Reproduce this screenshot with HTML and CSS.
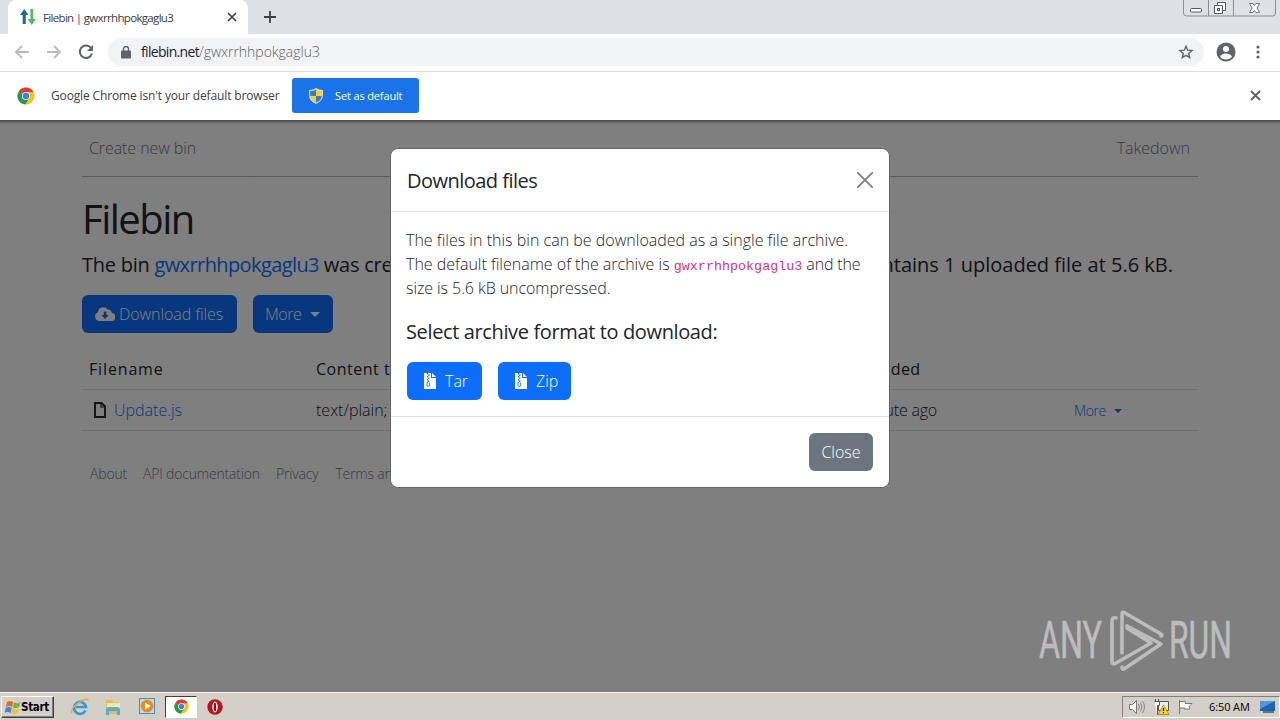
FILE: index.html
```html
<!DOCTYPE html>
<html lang="en">
<head>
<meta charset="utf-8">
<title>Filebin | gwxrrhhpokgaglu3</title>
<link rel="stylesheet" href="styles.css">
</head>
<body>
<svg class="defs" aria-hidden="true">
  <symbol id="chrome" viewBox="0 0 20 20">
    <circle cx="10" cy="10" r="9.5" fill="#fbc116"/>
    <path d="M10 10 1.8 5.2A9.5 9.5 0 0 1 18.3 5.5H10Z" fill="#df3b2f"/>
    <path d="M10 10 1.8 5.2A9.5 9.5 0 0 0 9 19.5L14 12Z" fill="#249b4e"/>
    <circle cx="10" cy="10" r="4.5" fill="#fff"/><circle cx="10" cy="10" r="3.6" fill="#3f7fe8"/>
  </symbol>
  <symbol id="zip" viewBox="0 0 12 16">
    <path d="M0 0h7v5h5v11H0Z" fill="#fff"/><path d="M8 0v4h4Z" fill="#fff"/>
    <path d="M3 0h1.2v1.5H3zM4.2 1.5h1.2V3H4.2zM3 3h1.2v1.5H3zM4.2 4.5h1.2V6H4.2zM3 6h1.2v1.5H3zM4.2 7.5h1.2V9H4.2z" fill="#0d6efd"/>
    <path d="M3.4 8.5 3 11.5a1.4 1.4 0 1 0 2.6 0L5.2 9.5" fill="none" stroke="#0d6efd" stroke-width=".9"/>
  </symbol>
</svg>
<div class="screen">
  <header class="tabstrip">
    <div class="tab">
      <svg class="favicon" width="16" height="16" viewBox="0 0 16 16"><path d="M0 6 4.2 0 8.4 6H5.8V15H2.7V6Z" fill="#1769aa"/><path d="M7.6 10 11.8 16 16 10H13.2V0H10.4V10Z" fill="#5db85b"/></svg>
      <span class="tab-title">Filebin | gwxrrhhpokgaglu3</span>
      <svg class="tab-close" width="10" height="10" viewBox="0 0 10 10"><path d="m1 1 8 8M9 1 1 9" stroke="#3c4043" stroke-width="1.7"/></svg>
    </div>
    <svg class="newtab" width="12" height="12" viewBox="0 0 12 12"><path d="M6 0v12M0 6h12" stroke="#3c4043" stroke-width="1.8"/></svg>
    <svg class="winbtns" width="94" height="18" viewBox="0 0 94 18"><path d="M.5 0v13q0 3 3 3h86q3 0 3-3V0M25.500 0v16M50.500 0v16" fill="none" stroke="#8b8f97"/>
      <rect x="7.500" y="8.500" width="11" height="3.500" rx="1" fill="#fff" stroke="#555a63"/>
      <path d="M34.500 2.500h8v8h-3v3h-8v-8h3Z" fill="#fff" stroke="#555a63"/><path d="M34.500 5.500h5v5" fill="none" stroke="#555a63"/><rect x="34.500" y="8.500" width="2" height="2" fill="#fff" stroke="#555a63"/>
      <path d="M66.500 3.500h3.500l1.500 2 1.500-2h3.500L74 8l2.500 4.500H73l-1.500-2-1.500 2h-3.500L69 8Z" fill="#fff" stroke="#666b74" stroke-width=".9"/></svg>
  </header>
  <div class="toolbar">
    <svg class="nav" width="16" height="14" viewBox="0 0 16 14"><path d="M15 7H2M8 1 2 7l6 6" fill="none" stroke="#b9bbbe" stroke-width="1.800"/></svg>
    <svg class="nav" width="16" height="14" viewBox="0 0 16 14"><path d="M1 7h13M8 1l6 6-6 6" fill="none" stroke="#b9bbbe" stroke-width="1.800"/></svg>
    <svg class="reload" width="16" height="16" viewBox="0 0 16 16"><path d="M13 4A6.200 6.200 0 1 0 14 9.500" fill="none" stroke="#5f6368" stroke-width="2"/><path d="M15 1v6H9Z" fill="#5f6368"/></svg>
    <div class="omnibox">
      <svg width="10" height="13" viewBox="0 0 10 13"><rect y="4.500" width="10" height="8" rx="1" fill="#5f6368"/><path d="M2.500 5V3a2.500 2.500 0 0 1 5 0v2" fill="none" stroke="#5f6368" stroke-width="1.400"/></svg>
      <span class="url"><b>filebin.net</b>/gwxrrhhpokgaglu3</span>
      <svg class="star" width="16" height="16" viewBox="0 0 16 16"><path d="m8 2.200 1.700 4 4.300.4-3.300 2.800 1 4.200L8 11.400l-3.700 2.200 1-4.200L2 6.600l4.300-.4Z" fill="none" stroke="#5f6368" stroke-width="1.400"/></svg>
    </div>
    <svg class="avatar" width="20" height="20" viewBox="0 0 20 20"><circle cx="10" cy="10" r="9.500" fill="#5f6368"/><circle cx="10" cy="7" r="3" fill="#fff"/><path d="M4 14.500q2-3 6-3t6 3q-2 3-6 3t-6-3Z" fill="#fff"/></svg>
    <svg class="dots" width="4" height="14" viewBox="0 0 4 14"><g fill="#5f6368"><circle cx="2" cy="2" r="1.600"/><circle cx="2" cy="7" r="1.600"/><circle cx="2" cy="12" r="1.600"/></g></svg>
  </div>
  <div class="infobar">
    <svg width="18" height="18"><use href="#chrome"/></svg>
    <span class="info-text">Google Chrome isn't your default browser</span>
    <button class="set-default">
      <svg width="14" height="16" viewBox="0 0 14 16"><path d="M7 0q3 2 7 2v5q0 6-7 9-7-3-7-9V2q4 0 7-2Z" fill="#d9dde0"/><path d="M7 1.500V8H1.200V3Q5 3 7 1.500Z" fill="#3c78c8"/><path d="M7 1.500V8h5.800V3Q9 3 7 1.500Z" fill="#f7d51d"/><path d="M1.200 8H7v6.700Q1.800 12.500 1.200 8Z" fill="#f7d51d"/><path d="M12.800 8H7v6.700q5.200-2.200 5.800-6.700Z" fill="#3c78c8"/></svg>
      <span>Set as default</span>
    </button>
    <svg class="info-close" width="11" height="11" viewBox="0 0 11 11"><path d="m1 1 9 9M10 1l-9 9" stroke="#5f6368" stroke-width="1.900"/></svg>
  </div>
  <main class="viewport">
    <div class="page">
      <nav class="topnav"><span class="create">Create new bin</span><span class="takedown">Takedown</span></nav>
      <h1>Filebin</h1>
      <div class="lead"><span class="lead-l">The bin <a>gwxrrhhpokgaglu3</a> was created</span><span class="lead-r">It contains 1 uploaded file at 5.6 kB.</span></div>
      <div class="actions">
        <button class="btn dl"><svg width="20" height="14" viewBox="0 0 20 14"><path d="M4.500 14A4.500 4.500 0 0 1 3 5.300 5.200 5.200 0 0 1 12.500 2.500 3.500 3.500 0 0 1 16.700 6 4 4 0 0 1 16 14Z" fill="#fff"/><path d="M8.700 4.500h2.600V8h2.500L10 12 6.200 8h2.500Z" fill="#0d6efd"/></svg><span>Download files</span></button>
        <button class="btn more"><span>More</span><i class="caret"></i></button>
      </div>
      <div class="table">
        <div class="row head"><span class="fn">Filename</span><span class="ct">Content type</span><span class="up">Uploaded</span><span></span></div>
        <div class="row"><span class="file"><svg width="12" height="16" viewBox="0 0 12 16"><path d="M1 1h6.500L11 4.500V15H1Z" fill="none" stroke="#212529" stroke-width="1.900"/><path d="M7 1v4h4" fill="none" stroke="#212529" stroke-width="1.200"/></svg><a>Update.js</a></span><span class="tp">text/plain;</span><span class="ago">1 minute ago</span><span class="rowmore">More<i class="caret"></i></span></div>
      </div>
      <footer class="foot"><span class="f1">About</span><span class="f2">API documentation</span><span class="f3">Privacy</span><span class="f4">Terms and</span></footer>
    </div>
    <div class="backdrop"></div>
    <section class="modal">
      <div class="m-head"><h5 class="m-title">Download files</h5><svg width="16" height="16" viewBox="0 0 16 16"><path d="m.8.8 14.400 14.400M15.200.8.800 15.200" stroke="#7f7f7f" stroke-width="1.800" stroke-linecap="round"/></svg></div>
      <div class="m-body">
        <p><span class="l1">The files in this bin can be downloaded as a single file archive.</span><br><span class="l2">The default filename of the archive is </span><code>gwxrrhhpokgaglu3</code><span class="l2b"> and the</span><br><span class="l3">size is 5.6 kB uncompressed.</span></p>
        <h5 class="select">Select archive format to download:</h5>
        <div class="formats"><button class="btn tar"><svg width="12" height="16"><use href="#zip"/></svg><span>Tar</span></button><button class="btn zip"><svg width="12" height="16"><use href="#zip"/></svg><span>Zip</span></button></div>
      </div>
      <div class="m-foot"><button class="btn close"><span>Close</span></button></div>
    </section>
    <svg class="watermark" width="215" height="80" viewBox="1035 600 215 80">
      <g class="wm-text"><text x="1039" y="658" textLength="63" lengthAdjust="spacingAndGlyphs">ANY</text><text x="1169" y="658" textLength="63" lengthAdjust="spacingAndGlyphs">RUN</text></g>
      <g fill="none" stroke="#bdbdbd" stroke-width="3.600" stroke-linejoin="round" stroke-linecap="round"><path d="M1116 618q-4-1-4 3v41q0 3 4 1l35-20-24-15"/><path d="M1122 653V614q0-3 3-1l36 21q2 1 0 2M1127 626l34 18-37 25q-2 1-2-2"/></g>
    </svg>
  </main>
  <div class="taskbar">
    <div class="start"><svg width="16" height="16" viewBox="0 0 16 16"><path d="M2 3q3-2 6 0L7 8Q4 6 1 8Z" fill="#e8652a"/><path d="M9 3.300q3 2 6.500 0L14 8q-3 2-6 .4Z" fill="#70b33a"/><path d="M.8 9q3-2 6 0L5.500 14q-3-2-6 0Z" fill="#3f86d6"/><path d="M7.700 9.400q3 2 6 0L12 14q-3 2-6 .3Z" fill="#f4c221"/></svg><b>Start</b></div>
    <svg class="ie" width="18" height="18" viewBox="0 0 18 18"><path d="M14.500 12.500A6 6 0 1 1 15 9H5" fill="none" stroke="#3699d8" stroke-width="2.600"/><path d="M1 15Q-1 10 9 4q8-5 8-1" fill="none" stroke="#e5ad33" stroke-width="1.400"/></svg>
    <svg class="explorer" width="18" height="18" viewBox="0 0 18 18"><path d="M2 2h6l1 2h6v12H2Z" fill="#e3bd5c"/><path d="M3 5h13v8H3Z" fill="#fae8a4"/><path d="M2 17v-5q0-3 3-3h8q3 0 3 3v5h-3v-4H5v4Z" fill="#5cabd1"/></svg>
    <svg class="wmp" width="17" height="17" viewBox="0 0 17 17"><rect x=".5" y=".5" width="15" height="15" fill="#b9dcf2" stroke="#4a8cc0"/><circle cx="8" cy="8" r="6.300" fill="#ee8a1d"/><path d="m6 4.500 5.500 3.500L6 11.500Z" fill="#fff"/></svg>
    <div class="active"><svg width="15" height="15"><use href="#chrome"/></svg></div>
    <svg class="opera" width="16" height="16" viewBox="0 0 16 16"><circle cx="8" cy="8" r="7.700" fill="#b5161c"/><ellipse cx="8" cy="8" rx="2.700" ry="5.400" fill="#fff"/><ellipse cx="8" cy="8" rx="1.200" ry="4.600" fill="#8d1017"/></svg>
    <div class="tray">
      <svg width="18" height="16" viewBox="0 0 18 16"><path d="M1.500 5.500h3l4-4v13l-4-4h-3Z" fill="#fff" stroke="#777"/><path d="M10.500 5q2 3 0 6M12.500 3.500q3 4.500 0 9M14.500 2q4 6 0 12" fill="none" stroke="#888"/></svg>
      <svg width="17" height="16" viewBox="0 0 17 16"><path d="M5.500 2.500h10v9h-10Z" fill="#eee" stroke="#555"/><path d="M1.500 2.500h5v4h-2v9M2.500 0v2M5.500 0v2" fill="#fff" stroke="#555"/><path d="m10.500 6 5.500 9.500H5Z" fill="#ffd322" stroke="#9a7900" stroke-width=".7"/><path d="M10.500 9v3M10.500 13v1.200" stroke="#222" stroke-width="1.300"/></svg>
      <svg width="17" height="16" viewBox="0 0 17 16"><path d="M2.500 1v14M2.500 2.500h6v2h6.500l-3 3 1 2.500H7.500V9h-5" fill="#fff" stroke="#777"/></svg>
      <span>6:50 AM</span>
      <svg class="desk" width="16" height="14" viewBox="0 0 16 14"><path d="M0 1h15v10H0Z" fill="#1f63b4"/><path d="M0 1h15L0 9Z" fill="#5198dd"/><path d="M3 12h11" stroke="#63718a" stroke-width="2"/></svg>
    </div>
  </div>
</div>
</body>
</html>
```
FILE: styles.css
```css
* { box-sizing: border-box; }
body { margin: 0; font-family: "Open Sans", "Noto Sans", sans-serif; font-weight: 300; }
svg { display: block; flex: none; }
h1, h5, p { margin: 0; }
button { border: 0; margin: 0; padding: 0; font: inherit; }
span { white-space: pre; }
.defs { position: absolute; width: 0; height: 0; }
.screen { width: 1280px; height: 720px; overflow: hidden; display: flex; flex-direction: column; background: #fff; }

.tabstrip { height: 34px; flex: none; background: #dee1e6; display: flex; padding-left: 8px; }
.tab { width: 240px; background: #fff; border-radius: 8px 8px 0 0; display: flex; align-items: center; padding: 0 11px 0 12px; }
.tab-title { font-size: 11.5px; font-weight: 400; color: #3c4043; margin-left: 7px; letter-spacing: -.67px; }
.tab-close { margin-left: auto; }
.newtab { margin: 11px 0 0 16px; }
.winbtns { margin-left: auto; margin-right: 3px; }
.toolbar { height: 38px; flex: none; display: flex; align-items: center; padding: 0 20px 1px 14px; border-bottom: 1px solid #dcdcde; }
.nav { margin-right: 16px; }
.omnibox { height: 28px; width: 1096px; margin-left: 14px; border-radius: 14px; background: #f1f3f4; display: flex; align-items: center; padding: 0 10px 0 13px; }
.url { margin-left: 10px; font-size: 14px; color: #5f6368; letter-spacing: -.02px; padding-bottom: 1px; }
.url b { font-weight: 400; color: #202124; letter-spacing: -.68px; }
.star { margin-left: auto; }
.avatar { margin-left: 12px; }
.dots { margin-left: auto; }
.infobar { height: 48px; flex: none; display: flex; align-items: center; padding: 0 19px 1px 17px; }
.info-text { font-size: 12px; font-weight: 400; color: #3c4043; margin-left: 16px; width: 229px; letter-spacing: -.14px; }
.set-default { width: 127px; height: 35px; margin-left: 12px; border-radius: 3px; background: #1a73e8; color: #fff; font-size: 11px; font-weight: 400; display: flex; align-items: center; padding-left: 17px; gap: 12px; letter-spacing: -.14px; }
.info-close { margin-left: auto; }

.viewport { position: relative; flex: 1; min-height: 0; overflow: hidden; }
.page { padding: 0 82px; color: #212529; }
.topnav { height: 57px; display: flex; justify-content: space-between; padding: 16px 8px 0 7px; border-bottom: 1px solid #b8b9ba; font-size: 16px; line-height: 24px; color: #6c757d; }
.create { letter-spacing: -.08px; }
h1 { font-size: 40px; line-height: 48px; font-weight: 400; margin-top: 18px; letter-spacing: -1.5px; }
.lead { display: flex; justify-content: space-between; font-size: 20px; line-height: 24px; font-weight: 400; margin-top: 10px; padding-right: 25px; }
.lead-l { letter-spacing: -.25px; }
.lead-l a { letter-spacing: -.6px; }
a { color: #0d6efd; }
.actions { display: flex; gap: 16px; margin-top: 18px; }
.btn { height: 38px; border-radius: 6px; background: #0d6efd; color: #fff; font-size: 16px; line-height: 24px; display: flex; align-items: center; }
.dl { width: 155px; padding-left: 13px; gap: 4px; }
.dl span { letter-spacing: -.07px; }
.more { width: 80px; padding-left: 12px; gap: 9px; }
.more span { letter-spacing: -.5px; }
.caret { width: 0; height: 0; border: 5px solid transparent; border-top-color: currentColor; border-bottom: 0; }
.table { margin-top: 16px; }
.row { height: 41px; display: grid; grid-template-columns: 227px 529px 229px auto; padding-left: 7px; align-items: center; border-bottom: 1px solid #dee2e6; font-size: 16px; line-height: 24px; }
.head { font-weight: 500; }
.fn { letter-spacing: .85px; }
.ct { letter-spacing: .5px; }
.up { letter-spacing: .35px; }
.ago { letter-spacing: -.2px; }
.file { display: flex; align-items: center; gap: 8px; padding-left: 5px; }
.rowmore { display: flex; align-items: center; gap: 8px; color: #0d6efd; font-size: 14px; letter-spacing: -.4px; padding-top: 1px; }
.rowmore .caret { border-width: 4px 4px 0; }
.foot { display: flex; margin-top: 32px; padding-left: 8px; gap: 16px; font-size: 14px; line-height: 21px; color: #6c757d; letter-spacing: -.18px; }
.f4 { padding-left: 1px; }
.backdrop { position: absolute; inset: 0; background: linear-gradient(rgba(0,0,0,.72), rgba(0,0,0,.5) 4px); }
.modal { position: absolute; left: 390px; top: 28px; width: 500px; height: 340px; border: 1px solid #666; border-radius: 8px; background: #fff; color: #212529; display: flex; flex-direction: column; }
.m-head { height: 63px; display: flex; align-items: center; justify-content: space-between; padding: 0 16px; border-bottom: 1px solid #dee2e6; }
h5 { font-size: 20px; line-height: 30px; font-weight: 400; white-space: pre; }
.m-title { letter-spacing: -.52px; padding-top: 1px; }
.m-body { height: 204px; padding: 16px 15px; }
.m-body p { font-size: 16px; line-height: 24px; height: 72px; }
.l1 { letter-spacing: .015px; }
.l2b { letter-spacing: -.15px; }
code { font-family: "Liberation Mono", monospace; font-size: 13.400px; line-height: 16px; color: #d63384; font-weight: 400; }
.l3 { letter-spacing: -.07px; }
.select { margin-top: 20px; line-height: 24px; letter-spacing: -.37px; }
.formats { display: flex; gap: 16px; margin: 18px 0 0 1px; }
.tar { width: 75px; padding-left: 17px; gap: 9px; }
.zip { width: 73px; padding-left: 17px; gap: 9px; }
.m-foot { flex: 1; border-top: 1px solid #dee2e6; display: flex; justify-content: flex-end; padding: 16px 16px 0 0; }
.close { background: #6c757d; width: 64px; justify-content: center; }
.watermark { position: absolute; left: 1035px; top: 480px; }
.wm-text { font-family: Roboto, sans-serif; font-size: 51px; font-weight: 400; fill: #bdbdbd; stroke: #bdbdbd; stroke-width: .6; }

.taskbar { height: 28px; flex: none; background: #d4d0c8; border-top: 1px solid #f7f6f3; display: flex; align-items: center; padding-left: 1px; }
.start { width: 53px; height: 22px; display: flex; align-items: center; padding-left: 3px; gap: 0; border: 1px solid; border-color: #fff #404040 #404040 #fff; box-shadow: inset -1px -1px #808080; font-size: 12px; color: #000; }
.start b { font-family: "DejaVu Sans Condensed", "DejaVu Sans", sans-serif; font-size: 11.5px; font-weight: 700; letter-spacing: -.3px; }
.ie { margin-left: 17px; }
.explorer { margin-left: 15px; }
.wmp { margin-left: 17px; }
.active { margin-left: 9px; width: 32px; height: 22px; background: #fff; border: 1px solid; border-color: #404040 #fff #fff #404040; display: grid; place-items: center; }
.opera { margin-left: 10px; }
.tray { margin-left: auto; width: 158px; height: 22px; border: 1px solid; border-color: #808080 #fff #fff #808080; display: flex; align-items: center; padding-left: 5px; gap: 7px; }
.tray span { font-size: 11px; font-weight: 400; margin-left: 8px; color: #000; letter-spacing: -.1px; }
.desk { margin-left: 3px; }
```
